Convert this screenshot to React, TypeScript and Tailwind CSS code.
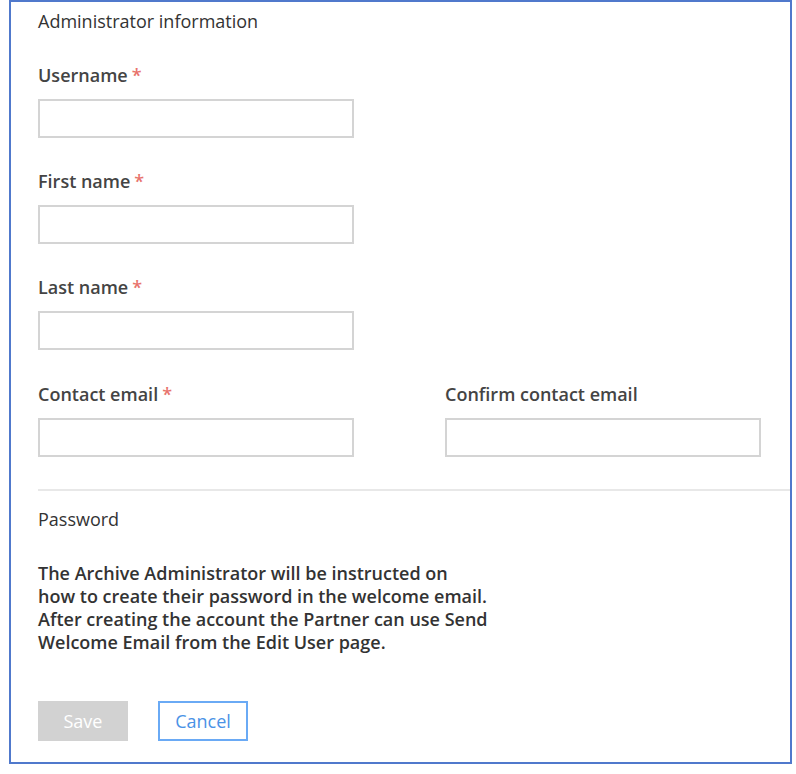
import React from "react";

function Field({ label, required }: { label: string; required?: boolean }) {
  return (
    <div className="flex flex-col">
      <label className="text-[18px] leading-6 font-semibold text-[#444]">
        {label}
        {required && <span className="ml-1 text-[#e8736c]">*</span>}
      </label>
      <input
        type="text"
        className="mt-3 h-[39px] w-[316px] border-2 border-[#d4d4d4] bg-white outline-none"
      />
    </div>
  );
}

export default function App() {
  return (
    <div
      className="min-h-[774px] bg-white text-[#333]"
      style={{ fontFamily: '"Open Sans", "Liberation Sans", sans-serif' }}
    >
      <div className="ml-[9px] flex h-[764px] w-[783px] flex-col border-2 border-[#5079cc] pl-[27px]">
        <h2 className="mt-[7px] text-[18px] leading-6 font-normal text-[#333]">
          Administrator information
        </h2>

        <div className="mt-[30px] flex flex-col gap-[31px]">
          <Field label="Username" required />
          <Field label="First name" required />
          <Field label="Last name" required />
          <div className="mt-px grid grid-cols-[316px_316px] gap-x-[91px]">
            <Field label="Contact email" required />
            <Field label="Confirm contact email" />
          </div>
        </div>

        <div className="mt-[32px] h-[2px] bg-[#e8e8e8]" />

        <h2 className="mt-[16px] text-[18px] leading-6 font-normal text-[#333]">
          Password
        </h2>

        <p className="mt-[31px] text-[18px] leading-[23px] font-semibold text-[#333]">
          The Archive Administrator will be instructed on
          <br />
          how to create their password in the welcome email.
          <br />
          After creating the account the Partner can use Send
          <br />
          Welcome Email from the Edit User page.
        </p>

        <div className="mt-[47px] flex gap-[30px]">
          <button
            type="button"
            disabled
            className="h-[40px] w-[90px] bg-[#d2d2d2] text-[18px] text-white"
          >
            Save
          </button>
          <button
            type="button"
            className="h-[40px] w-[90px] border-2 border-[#6aaaf5] bg-white text-[18px] text-[#4a92e6]"
          >
            Cancel
          </button>
        </div>
      </div>
    </div>
  );
}
